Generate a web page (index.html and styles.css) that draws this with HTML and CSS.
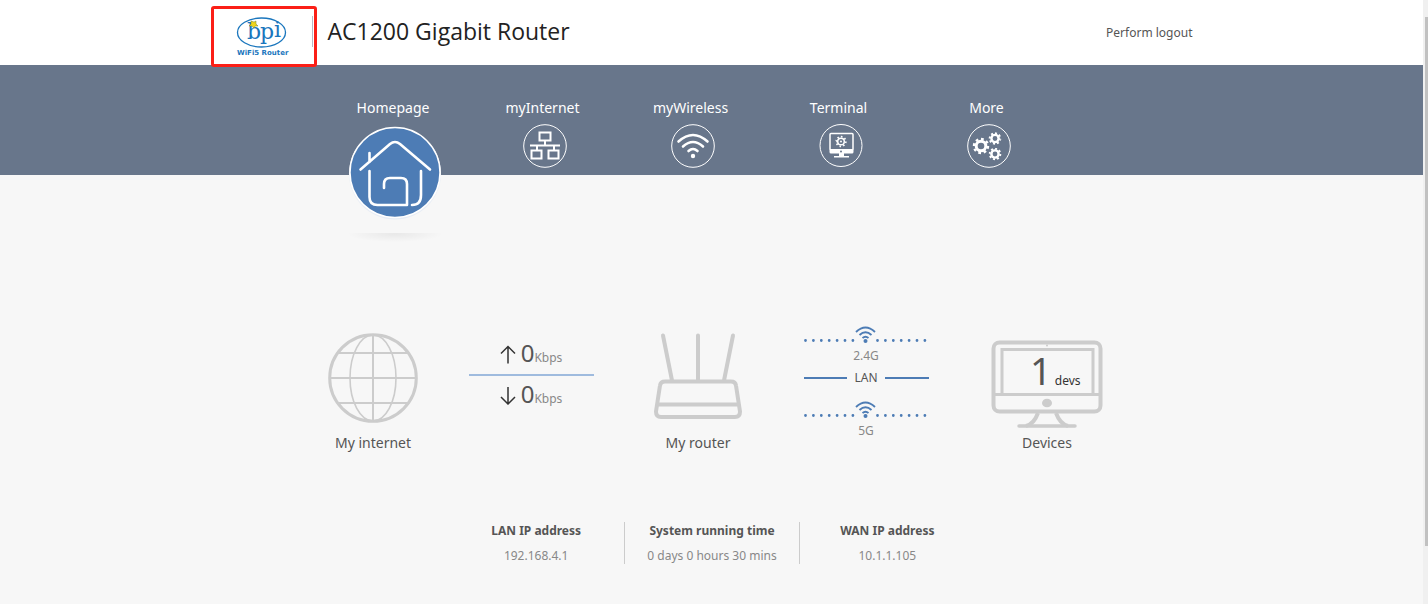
FILE: index.html
```html
<!DOCTYPE html>
<html lang="en">
<head>
<meta charset="utf-8">
<meta name="viewport" content="width=device-width, initial-scale=1">
<title>AC1200 Gigabit Router</title>
<link rel="stylesheet" href="styles.css">
</head>
<body>
<div class="page">
  <header class="header">
    <div class="container header-row">
      <a class="logo" href="#" aria-label="BPI WiFi5 Router">
        <svg width="100" height="55" viewBox="0 0 100 55">
          <ellipse cx="47.500" cy="23.500" rx="24" ry="14.500" fill="none" stroke="#1a76bd" stroke-width="1.300"/>
          <text class="logo-letters" x="33" y="30">b</text>
          <text class="logo-letters" x="46" y="30">p</text>
          <text class="logo-letters" x="60" y="28">i</text>
          <path d="M37 12l3 1 2-1 0 3 2 2-3 0-1 2-2-2-3 0 2-2z" fill="#f0d51c" stroke="#70842c" stroke-width=".5"/>
          <text class="logo-caption" x="23" y="46">WiFi5 Router</text>
          <path d="M98.500 7v31" stroke="#b9b9c6"/>
        </svg>
      </a>
      <h1 class="title">AC1200 Gigabit Router</h1>
      <a class="logout" href="#">Perform logout</a>
    </div>
  </header>

  <nav class="nav" aria-label="Main">
    <div class="container nav-row">
      <a class="nav-item nav-item-active" href="#"><span>Homepage</span>
        <svg class="nav-icon" width="96" height="118" viewBox="0 0 96 118">
          <defs>
            <radialGradient id="shade"><stop offset="0" stop-color="#000" stop-opacity=".06"/><stop offset="1" stop-color="#000" stop-opacity="0"/></radialGradient>
            <clipPath id="floor"><path d="M0 109h96v9H0z"/></clipPath>
          </defs>
          <ellipse cx="48" cy="110" rx="48" ry="8" fill="url(#shade)" clip-path="url(#floor)"/>
          <circle cx="48" cy="49.500" r="46" fill="#e8edf5"/>
          <circle cx="48" cy="48.500" r="45" fill="#4d7cb5" stroke="#fff" stroke-width="1.500"/>
          <g fill="none" stroke="#fff" stroke-width="2.600" stroke-linecap="round" stroke-linejoin="round">
            <path d="M13.500 45.500L43 20q5-4 10 0L83 45.500M22.500 29v9M22.500 47v26q0 8 8 8H60V60q0-6-6-6H43q-6 0-6 6v4M74 47v24q0 10-9 10"/>
          </g>
        </svg>
      </a>
      <a class="nav-item" href="#"><span>myInternet</span>
        <svg class="nav-icon" width="44" height="44" viewBox="0 0 44 44" fill="none" stroke="#fff">
          <circle cx="22" cy="22" r="21.300"/>
          <path d="M16.500 8.500h11v8h-11zM8.500 26.500h10v8h-10zM25.500 26.500h10v8h-10zM22 16v5.500M7 21.500h30M14 21.500v5M31 21.500v5" stroke-width="2"/>
        </svg>
      </a>
      <a class="nav-item" href="#"><span>myWireless</span>
        <svg class="nav-icon" width="44" height="44" viewBox="0 0 44 44" fill="none" stroke="#fff">
          <circle cx="22" cy="22" r="21.300"/>
          <path d="M7.500 17.500q14.500-13 29 0M12 22.500q10-9 20 0M17.500 27q4.500-4 9 0" stroke-width="2.600" stroke-linecap="round"/>
          <circle cx="22" cy="32" r="2.200" fill="#fff" stroke="none"/>
        </svg>
      </a>
      <a class="nav-item" href="#"><span>Terminal</span>
        <svg class="nav-icon" width="44" height="44" viewBox="0 0 44 44" fill="none" stroke="#fff">
          <circle cx="22" cy="21.500" r="21"/>
          <path d="M11 25.500V10.500q0-1 1-1h21q1 0 1 1v15" stroke-width="1.500"/>
          <path d="M10.500 25h24v3q0 1.500-1.500 1.500h-8v2.500h5v1.500H15V32h5v-2.500h-8q-1.500 0-1.500-1.500z" fill="#fff" stroke="none"/>
          <circle cx="22" cy="17.500" r="3.300" stroke-width="1.500"/>
          <circle cx="22" cy="17.500" r="4.800" stroke-width="1.800" pathLength="80" stroke-dasharray="4 6"/>
          <circle cx="22" cy="17.500" r="1" fill="#fff" stroke="none"/>
          <circle cx="22" cy="27.500" r="1" fill="#68768b" stroke="none"/>
        </svg>
      </a>
      <a class="nav-item" href="#"><span>More</span>
        <svg class="nav-icon" width="44" height="44" viewBox="0 0 44 44" fill="none" stroke="#fff">
          <circle cx="22" cy="22" r="21.300"/>
          <circle cx="14" cy="22" r="4.800" stroke-width="3"/>
          <circle cx="14" cy="22" r="7" stroke-width="2.400" pathLength="80" stroke-dasharray="5 5"/>
          <circle cx="28" cy="14.500" r="3.600" stroke-width="2.400"/>
          <circle cx="28" cy="14.500" r="5.300" stroke-width="2" pathLength="80" stroke-dasharray="5 5"/>
          <circle cx="28" cy="30" r="3.600" stroke-width="2.400"/>
          <circle cx="28" cy="30" r="5.300" stroke-width="2" pathLength="80" stroke-dasharray="5 5"/>
        </svg>
      </a>
    </div>
  </nav>

  <main>
    <section class="status">
      <a class="node" href="#">
        <svg width="92" height="100" viewBox="0 0 92 100" fill="none" stroke="#ccc">
          <circle cx="46" cy="48" r="43.300" stroke-width="3"/>
          <ellipse cx="46" cy="48" rx="23" ry="43" stroke-width="1.600"/>
          <path d="M46 5v86M3 48h86M12 23h68M12 73h68" stroke-width="2"/>
        </svg>
        <span>My internet</span>
      </a>
      <div class="speed">
        <p class="rate">
          <svg width="16" height="20" viewBox="0 0 16 20" fill="none" stroke="#333" stroke-width="1.500"><path d="M8 2.500v17M1 9.500l7-7 7 7"/></svg>
          <span class="rate-value">0</span><span class="rate-unit">Kbps</span>
        </p>
        <p class="rate">
          <svg width="16" height="20" viewBox="0 0 16 20" fill="none" stroke="#333" stroke-width="1.500"><path d="M8 2v17M1 12l7 7 7-7"/></svg>
          <span class="rate-value">0</span><span class="rate-unit">Kbps</span>
        </p>
      </div>
      <a class="node" href="#">
        <svg width="92" height="100" viewBox="0 0 92 100" fill="none" stroke="#ccc" stroke-width="4" stroke-linecap="round" stroke-linejoin="round">
          <path d="M11 5.500l9 45M46 5.500v45M81 5.500l-9 45M13 51.500h66q4.500 0 5 4l4 26q0 5.500-5 5.500H9q-5 0-5-5.500L8 55.500q.5-4 5-4zM6 74.500h80"/>
        </svg>
        <span>My router</span>
      </a>
      <div class="links">
        <div class="link">
          <svg width="125" height="20" viewBox="0 0 125 20" fill="none" stroke="#4d7cb5">
            <path d="M1.500 16.500h50M73.500 16.500h49" stroke-width="2.800" stroke-dasharray="0 7.900" stroke-linecap="round"/>
            <path d="M52 8q9.500-9 19 0M55.500 11q6-5.500 12 0M58.500 14q3-2.500 6 0" stroke-width="1.900"/>
            <circle cx="61.500" cy="17" r="2" fill="#4d7cb5" stroke="none"/>
          </svg>
          <span>2.4G</span>
        </div>
        <div class="lan">LAN</div>
        <div class="link">
          <svg width="125" height="20" viewBox="0 0 125 20" fill="none" stroke="#4d7cb5">
            <path d="M1.500 16.500h50M73.500 16.500h49" stroke-width="2.800" stroke-dasharray="0 7.900" stroke-linecap="round"/>
            <path d="M52 8q9.500-9 19 0M55.500 11q6-5.500 12 0M58.500 14q3-2.500 6 0" stroke-width="1.900"/>
            <circle cx="61.500" cy="17" r="2" fill="#4d7cb5" stroke="none"/>
          </svg>
          <span>5G</span>
        </div>
      </div>
      <a class="node" href="#">
        <svg width="112" height="100" viewBox="0 0 112 100" fill="none" stroke="#ccc">
          <rect x="2.500" y="12.500" width="107" height="69" rx="6" stroke-width="4"/>
          <path d="M11 64V19.500h91V64M4 64.500h104" stroke-width="3"/>
          <path d="M28 96h56" stroke-width="3.500" stroke-linecap="round"/>
          <path d="M47 83q-4 11-12 13M65 83q4 11 12 13" stroke-width="4"/>
          <circle cx="56" cy="15.500" r="1" fill="#ccc" stroke="none"/>
          <ellipse cx="56" cy="73" rx="5" ry="4.300" fill="#ccc" stroke="none"/>
        </svg>
        <span>Devices</span>
        <span class="count"><b>1</b> devs</span>
      </a>
    </section>

    <dl class="info">
      <div><dt>LAN IP address</dt><dd>192.168.4.1</dd></div>
      <div><dt>System running time</dt><dd>0 days 0 hours 30 mins</dd></div>
      <div><dt>WAN IP address</dt><dd>10.1.1.105</dd></div>
    </dl>
  </main>
</div>
<div class="scroll-track"><div class="scroll-thumb"></div></div>
</body>
</html>
```
FILE: styles.css
```css
* { box-sizing: border-box; }

body {
  margin: 0;
  display: flex;
  height: 100vh;
  overflow: hidden;
  background: #f7f7f7;
  color: #555;
  font-family: "Noto Sans", "Open Sans", sans-serif;
  font-size: 14px;
}

a { color: inherit; text-decoration: none; }
svg { display: block; flex: none; }

.page { flex: 1; min-width: 0; }
.container { max-width: 1002px; margin: 0 auto; }

.header { height: 65px; background: #fff; }
.header-row { display: flex; align-items: flex-start; }
.logo {
  position: relative;
  z-index: 1;
  margin-top: 6px;
  border: 3px solid #fb1f17;
  border-radius: 3px;
}
.logo-letters { font: 22px "DejaVu Serif", serif; fill: #1a76bd; }
.logo-caption { font: bold 7px "DejaVu Sans", sans-serif; fill: #1a76bd; }
.title {
  margin: 0 0 0 11px;
  color: #222;
  font-family: "Open Sans", "Noto Sans", sans-serif;
  font-size: 23px;
  font-weight: 400;
  line-height: 63px;
}
.logout {
  margin: 0 20px 0 auto;
  font-size: 12px;
  line-height: 66px;
}

.nav { height: 110px; background: #68768b; color: #fff; }
.nav-row { display: flex; padding: 31px 0 0 107px; }
.nav-item {
  display: flex;
  flex-direction: column;
  align-items: center;
  gap: 4px;
  width: 148px;
  line-height: 24px;
}
.nav-item-active { width: 151px; }
.nav-icon { margin-left: 4px; }

.status {
  display: grid;
  grid-template-columns: 140fr 176fr 158fr 178fr 184fr;
  max-width: 855px;
  margin: 0 auto;
  padding: 155px 0 0 19px;
}
.node {
  position: relative;
  display: flex;
  flex-direction: column;
  align-items: center;
  line-height: 26px;
}
.count {
  position: absolute;
  top: 14px;
  left: 50%;
  margin-left: -17px;
  color: #333;
  font-size: 12px;
  line-height: 52px;
}
.count b { color: #555; font-size: 38px; font-weight: 400; }

.speed { width: 125px; margin: 4px auto 0; }
.rate {
  display: flex;
  align-items: baseline;
  justify-content: center;
  margin: 0;
  height: 40px;
  line-height: 38px;
}
.rate + .rate { border-top: 2px solid #9fbbde; line-height: 36px; }
.rate svg { align-self: center; margin-right: 5px; }
.rate-value { font-size: 24px; }
.rate-unit { color: #888; font-size: 12px; }

.links { width: 125px; margin: -6px auto 0; text-align: center; font-size: 12px; line-height: 22px; }
.link { color: #888; }
.link span { display: block; padding-top: 1px; }
.lan { display: flex; align-items: center; gap: 7px; margin-bottom: 10px; }
.lan::before, .lan::after { content: ""; flex: 1; height: 2px; background: #4d7cb5; }

.info {
  display: grid;
  grid-template-columns: 1fr 1fr 1fr;
  max-width: 526px;
  margin: 66px auto 0;
  text-align: center;
  font-size: 12px;
}
.info div { line-height: 17px; }
.info div + div { border-left: 1px solid #ccc; }
.info dt { font-weight: 700; }
.info dd { margin: 8px 0 0; color: #888; }

.scroll-track { width: 5px; padding: 17px 0 0 2px; background: #f0f0f0; }
.scroll-thumb { height: 529px; background: #c1c1c1; }
```
